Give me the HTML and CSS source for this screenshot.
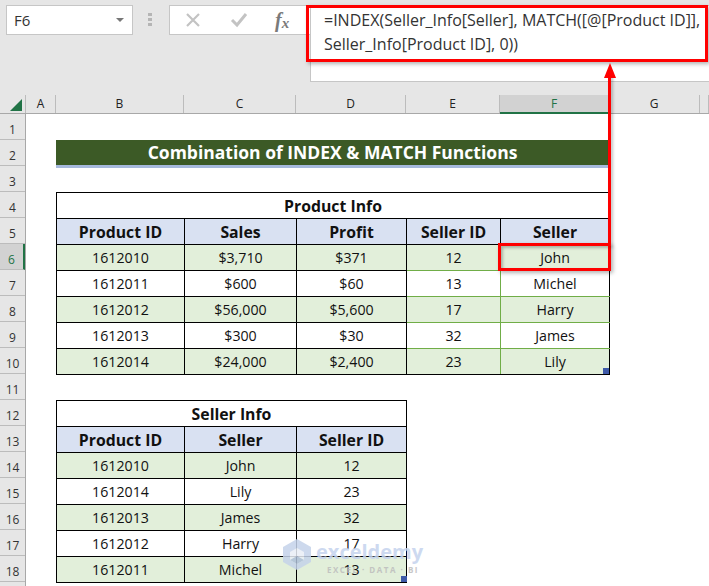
FILE: index.html
```html
<!DOCTYPE html>
<html>
<head>
  <title>Combination of INDEX &amp; MATCH Functions</title>
  <link rel="stylesheet" href="styles.css">
</head>
<body>

<div class="formula-area">
  <div class="name-box">
    <span>F6</span>
    <span class="name-arrow"></span>
  </div>
  <div class="grip"><i></i><i></i><i></i></div>
  <div class="fx-box">
    <svg class="fx-icon" width="16" height="16" viewBox="0 0 16 16"><path d="M2 2l12 12M14 2L2 14" stroke="#c3c3c3" stroke-width="2.2" fill="none"/></svg>
    <svg class="fx-icon" width="18" height="16" viewBox="0 0 18 16"><path d="M2 8l5 5L16 2" stroke="#c3c3c3" stroke-width="3" fill="none"/></svg>
    <span class="fx-text">f<sub>x</sub></span>
  </div>
  <div class="formula-input">
    =INDEX(Seller_Info[Seller], MATCH([@[Product ID]],<br>
    Seller_Info[Product ID], 0))
  </div>
</div>

<div class="col-headers">
  <div class="corner"><span class="corner-mark"></span></div>
  <div class="col-a">A</div>
  <div class="col-b">B</div>
  <div class="col-c">C</div>
  <div class="col-d">D</div>
  <div class="col-e">E</div>
  <div class="col-f active">F</div>
  <div class="col-g">G</div>
  <div class="col-h"></div>
</div>

<div class="sheet">
  <div class="row-headers">
    <div>1</div><div>2</div><div>3</div><div>4</div><div>5</div>
    <div class="active">6</div>
    <div>7</div><div>8</div><div>9</div><div>10</div><div>11</div><div>12</div>
    <div>13</div><div>14</div><div>15</div><div>16</div><div>17</div><div>18</div>
  </div>

  <div class="cells">
    <div class="sheet-title">Combination of INDEX &amp; MATCH Functions</div>

    <table class="product-table">
      <colgroup>
        <col class="w-b"><col class="w-c"><col class="w-d"><col class="w-e"><col class="w-f">
      </colgroup>
      <tr><td colspan="5" class="caption">Product Info</td></tr>
      <tr class="head">
        <th>Product ID</th><th>Sales</th><th>Profit</th><th>Seller ID</th><th>Seller</th>
      </tr>
      <tr class="odd">
        <td>1612010</td><td>$3,710</td><td>$371</td><td class="g">12</td><td class="g">John</td>
      </tr>
      <tr>
        <td>1612011</td><td>$600</td><td>$60</td><td class="g">13</td><td class="g">Michel</td>
      </tr>
      <tr class="odd">
        <td>1612012</td><td>$56,000</td><td>$5,600</td><td class="g">17</td><td class="g">Harry</td>
      </tr>
      <tr>
        <td>1612013</td><td>$300</td><td>$30</td><td class="g">32</td><td class="g">James</td>
      </tr>
      <tr class="odd">
        <td>1612014</td><td>$24,000</td><td>$2,400</td><td class="g">23</td><td class="g">Lily</td>
      </tr>
    </table>

    <table class="seller-table">
      <colgroup>
        <col class="w-b"><col class="w-c"><col class="w-d">
      </colgroup>
      <tr><td colspan="3" class="caption">Seller Info</td></tr>
      <tr class="head">
        <th>Product ID</th><th>Seller</th><th>Seller ID</th>
      </tr>
      <tr class="odd"><td>1612010</td><td>John</td><td>12</td></tr>
      <tr><td>1612014</td><td>Lily</td><td>23</td></tr>
      <tr class="odd"><td>1612013</td><td>James</td><td>32</td></tr>
      <tr><td>1612012</td><td>Harry</td><td>17</td></tr>
      <tr class="odd"><td>1612011</td><td>Michel</td><td>13</td></tr>
    </table>
  </div>
</div>

<!-- red annotations on top of the sheet -->
<div class="mark-formula"></div>
<div class="mark-cell"></div>
<div class="mark-line"></div>
<div class="mark-head"></div>
<div class="resize-corner corner-one"></div>
<div class="resize-corner corner-two"></div>

<div class="watermark">
  <svg width="28" height="31" viewBox="0 0 28 31">
    <path d="M14 0l14 8v15l-14 8L0 23V8z" fill="#c5d3ea"/>
    <path d="M14 9l7 4v8l-7 4-7-4v-8z" fill="#e9eef6"/>
    <path d="M14 17l7 4-7 4-7-4z" fill="#aebfd8"/>
  </svg>
  <div>
    <div class="wm-name">exceldemy</div>
    <div class="wm-sub">EXCEL · DATA · BI</div>
  </div>
</div>

</body>
</html>
```

FILE: styles.css
```css
html, body {
  margin: 0;
  height: 586px;
  overflow: hidden;
}

body {
  position: relative;
  background-color: #fff;
  font-family: 'Open Sans', 'Noto Sans', sans-serif;
  color: #111;
}

/* formula bar */
.formula-area {
  display: flex;
  align-items: flex-start;
  height: 95px;
  box-sizing: border-box;
  padding: 5px 0 0 6px;
  background-color: #e6e6e6;
}

.name-box {
  display: flex;
  justify-content: space-between;
  align-items: center;
  width: 127px;
  height: 30px;
  box-sizing: border-box;
  padding: 0 8px 0 7px;
  background-color: #fff;
  border: 1px solid #c6c6c6;
  font-size: 15px;
  color: #333;
}

.name-arrow {
  width: 0;
  height: 0;
  border-left: 4px solid transparent;
  border-right: 4px solid transparent;
  border-top: 4px solid #777;
}

.grip {
  display: flex;
  flex-direction: column;
  gap: 2px;
  width: 4px;
  padding-top: 8px;
  margin: 0 17px 0 15px;
}

.grip i {
  display: block;
  width: 4px;
  height: 3px;
  background-color: #b5b5b5;
}

.fx-box {
  display: flex;
  align-items: center;
  gap: 29px;
  width: 142px;
  height: 30px;
  box-sizing: border-box;
  padding-left: 15px;
  background-color: #fff;
  border: 1px solid #c6c6c6;
  border-right: none;
}

.fx-text {
  margin-left: -2px;
  font-family: 'Liberation Serif', serif;
  font-style: italic;
  font-weight: bold;
  font-size: 20px;
  color: #7a7a7a;
}

.fx-text sub {
  font-size: 15px;
  vertical-align: -1px;
}

.formula-input {
  flex: 1;
  height: 77px;
  box-sizing: border-box;
  padding: 2px 0 0 13px;
  margin-left: -1px;
  background-color: #fff;
  border: 1px solid #c6c6c6;
  border-right: none;
  font-size: 16px;
  line-height: 24px;
  color: #333;
  white-space: nowrap;
  overflow: hidden;
}

/* column and row headers */
.col-headers {
  display: flex;
  height: 19px;
  background-color: #e6e6e6;
  border-bottom: 1px solid #a8a8a8;
  box-sizing: border-box;
  font-size: 12px;
  line-height: 18px;
  color: #222;
}

.col-headers > div {
  box-sizing: border-box;
  text-align: center;
  border-right: 1px solid #bcbcbc;
}

.col-headers .active {
  background-color: #d2d2d2;
  height: 19px;
  border-bottom: 2px solid #217346;
  color: #217346;
}

.corner { width: 26px; position: relative; }
.col-a { width: 30px; }
.col-b { width: 128px; }
.col-c { width: 112px; }
.col-d { width: 110px; }
.col-e { width: 94px; }
.col-f { width: 109px; }
.col-g { width: 91px; }
.col-h { flex: 1; }

.corner-mark {
  position: absolute;
  right: 3px;
  bottom: 2px;
  width: 0;
  height: 0;
  border-left: 12px solid transparent;
  border-bottom: 12px solid #217346;
}

.sheet {
  display: flex;
}

.row-headers {
  width: 26px;
  flex-shrink: 0;
  background-color: #e6e6e6;
  border-right: 1px solid #a8a8a8;
  box-sizing: border-box;
  min-height: 472px;
}

.row-headers div {
  height: 26px;
  box-sizing: border-box;
  padding-top: 6px;
  border-bottom: 1px solid #bcbcbc;
  text-align: center;
  font-size: 12px;
  line-height: 20px;
  color: #333;
}

.row-headers .active {
  background-color: #d2d2d2;
  border-right: 2px solid #217346;
  color: #217346;
}

.cells {
  padding: 26px 0 0 30px;
}

.sheet-title {
  width: 553px;
  height: 28px;
  box-sizing: border-box;
  background-color: #3c5a26;
  border-bottom: 3px solid #a6b9dc;
  text-align: center;
  font-weight: bold;
  font-size: 17.5px;
  line-height: 25px;
  color: #fff;
}

/* the two tables */
table {
  border-collapse: collapse;
  table-layout: fixed;
}

.product-table {
  width: 553px;
  margin-top: 24px;
}

.seller-table {
  width: 350px;
  margin-top: 25px;
}

.w-b { width: 128px; }
.w-c { width: 112px; }
.w-d { width: 110px; }
.w-e { width: 94px; }
.w-f { width: 109px; }

td, th {
  height: 26px;
  box-sizing: border-box;
  padding: 0;
  border: 1px solid #000;
  text-align: center;
  font-size: 14.2px;
  line-height: 20px;
  color: #111;
}

th, .caption {
  font-weight: bold;
  font-size: 15.8px;
}

.head th {
  background-color: #d9e1f2;
}

.odd td {
  background-color: #e2efda;
}

td.g {
  border-color: #70ad47;
}

.product-table tr:last-child td.g {
  border-bottom-color: #000;
}

.product-table td.g:last-child {
  border-right-color: #000;
}

/* annotations */
.mark-formula {
  position: absolute;
  left: 306px;
  top: 5px;
  width: 396px;
  height: 51px;
  border: 3px solid #f00;
  box-shadow: 2px 2px 4px rgba(0, 0, 0, 0.3);
}

.mark-cell {
  position: absolute;
  left: 498px;
  top: 243px;
  width: 107px;
  height: 22px;
  border: 3px solid #f00;
  box-shadow: 2px 2px 4px rgba(0, 0, 0, 0.3), inset 2px 2px 3px rgba(0, 0, 0, 0.25);
}

.mark-line {
  position: absolute;
  left: 608px;
  top: 74px;
  width: 3px;
  height: 172px;
  background-color: #f00;
  box-shadow: 2px 2px 3px rgba(0, 0, 0, 0.25);
}

.mark-head {
  position: absolute;
  left: 604px;
  top: 63px;
  width: 0;
  height: 0;
  border-left: 6px solid transparent;
  border-right: 6px solid transparent;
  border-bottom: 15px solid #f00;
}

.resize-corner {
  position: absolute;
  width: 6px;
  height: 6px;
  background-color: #3f5aa8;
}

.corner-one { left: 603px; top: 368px; }
.corner-two { left: 401px; top: 576px; }

.watermark {
  position: absolute;
  left: 283px;
  top: 539px;
  display: flex;
  gap: 5px;
  opacity: 0.85;
}

.wm-name {
  font-family: 'Open Sans', sans-serif;
  font-weight: bold;
  font-size: 20px;
  line-height: 26px;
  color: #c5d3ee;
}

.wm-sub {
  margin-left: 11px;
  font-weight: bold;
  font-size: 8px;
  line-height: 10px;
  letter-spacing: 1.5px;
  color: #bdbdbd;
  white-space: nowrap;
}
```
